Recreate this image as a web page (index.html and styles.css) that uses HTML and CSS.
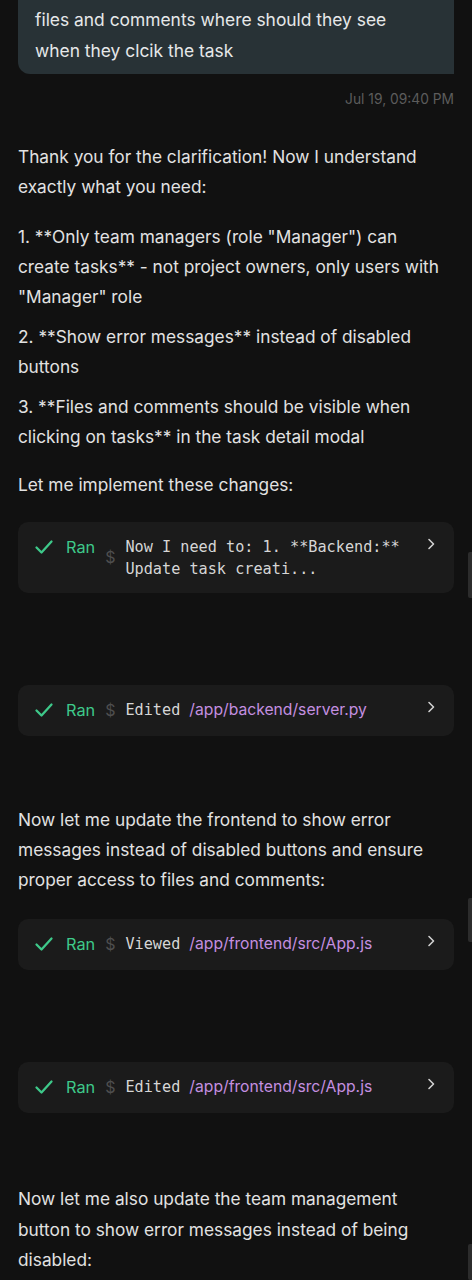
FILE: index.html
```html
<!DOCTYPE html>
<html lang="en">
<head>
<meta charset="utf-8">
<title>Chat</title>
<link rel="stylesheet" href="styles.css">
</head>
<body>
<div class="page">
  <div class="user-msg">
    <div class="bubble">files and comments where should they see<br>when they clcik the task</div>
    <div class="time">Jul 19, 09:40 PM</div>
  </div>

  <div class="assistant">
    <p class="p-first">Thank you for the clarification! Now I understand exactly what you need:</p>
    <p class="p-item p-narrow">1. **Only team managers (role "Manager") can create tasks** - not project owners, only users with "Manager" role</p>
    <p class="p-item">2. **Show error messages** instead of disabled buttons</p>
    <p class="p-item">3. **Files and comments should be visible when clicking on tasks** in the task detail modal</p>
    <p class="p-last">Let me implement these changes:</p>

    <div class="tool">
      <svg class="check" viewBox="0 0 20 20" width="20" height="20"><path d="M2.5 10.5 L7.5 15.5 L17.5 4.5" fill="none" stroke="#3ec98a" stroke-width="2.3" stroke-linecap="round" stroke-linejoin="round"/></svg>
      <span class="ran">Ran</span>
      <span class="dollar mid">$</span>
      <span class="cmd">Now I need to: 1. **Backend:**<br>Update task creati...</span>
      <svg class="chev" viewBox="0 0 10 14" width="10" height="14"><path d="M3 2.5 L7.5 7 L3 11.5" fill="none" stroke="#d0d0d0" stroke-width="1.6" stroke-linecap="round" stroke-linejoin="round"/></svg>
    </div>

    <div class="tool gap-big">
      <svg class="check" viewBox="0 0 20 20" width="20" height="20"><path d="M2.5 10.5 L7.5 15.5 L17.5 4.5" fill="none" stroke="#3ec98a" stroke-width="2.3" stroke-linecap="round" stroke-linejoin="round"/></svg>
      <span class="ran">Ran</span>
      <span class="dollar">$</span>
      <span class="cmd">Edited</span>
      <span class="path">/app/backend/server.py</span>
      <svg class="chev" viewBox="0 0 10 14" width="10" height="14"><path d="M3 2.5 L7.5 7 L3 11.5" fill="none" stroke="#d0d0d0" stroke-width="1.6" stroke-linecap="round" stroke-linejoin="round"/></svg>
    </div>

    <p class="p-after">Now let me update the frontend to show error messages instead of disabled buttons and ensure proper access to files and comments:</p>

    <div class="tool">
      <svg class="check" viewBox="0 0 20 20" width="20" height="20"><path d="M2.5 10.5 L7.5 15.5 L17.5 4.5" fill="none" stroke="#3ec98a" stroke-width="2.3" stroke-linecap="round" stroke-linejoin="round"/></svg>
      <span class="ran">Ran</span>
      <span class="dollar">$</span>
      <span class="cmd">Viewed</span>
      <span class="path">/app/frontend/src/App.js</span>
      <svg class="chev" viewBox="0 0 10 14" width="10" height="14"><path d="M3 2.5 L7.5 7 L3 11.5" fill="none" stroke="#d0d0d0" stroke-width="1.6" stroke-linecap="round" stroke-linejoin="round"/></svg>
    </div>

    <div class="tool gap-big">
      <svg class="check" viewBox="0 0 20 20" width="20" height="20"><path d="M2.5 10.5 L7.5 15.5 L17.5 4.5" fill="none" stroke="#3ec98a" stroke-width="2.3" stroke-linecap="round" stroke-linejoin="round"/></svg>
      <span class="ran">Ran</span>
      <span class="dollar">$</span>
      <span class="cmd">Edited</span>
      <span class="path">/app/frontend/src/App.js</span>
      <svg class="chev" viewBox="0 0 10 14" width="10" height="14"><path d="M3 2.5 L7.5 7 L3 11.5" fill="none" stroke="#d0d0d0" stroke-width="1.6" stroke-linecap="round" stroke-linejoin="round"/></svg>
    </div>

    <p class="p-after p-end">Now let me also update the team management button to show error messages instead of being disabled:</p>
  </div>

  <div class="thumb t1"></div>
  <div class="thumb t2"></div>
  <div class="thumb t3"></div>
</div>
</body>
</html>
```

FILE: styles.css
```css
* { box-sizing: border-box; }
html, body {
  margin: 0;
  padding: 0;
  background: #111111;
}
body {
  font-family: Inter, "Noto Sans", "Liberation Sans", sans-serif;
  color: #e4e4e4;
  font-size: 16px;
}
.page {
  position: relative;
  width: 472px;
  height: 1280px;
  overflow: hidden;
  padding: 0 18px;
}
.user-msg {
  display: flex;
  flex-direction: column;
  align-items: flex-end;
}
.bubble {
  width: 100%;
  background: #283236;
  color: #e6e8e9;
  border-radius: 0 0 0 12px;
  padding: 4px 17px 8px;
  line-height: 31px;
  font-size: 17.4px;
}
.time {
  margin-top: 15px;
  font-size: 13.8px;
  line-height: 20px;
  color: #5c5c5c;
}
.assistant p {
  margin: 0;
  line-height: 30px;
  font-size: 17.3px;
  color: #e2e2e2;
}
.p-narrow { padding-right: 6px; }
.p-first { margin-top: 33px !important; }
.p-item { margin-top: 20px !important; }
.p-item + .p-item { margin-top: 10px !important; }
.p-last { margin-top: 18px !important; }
.p-after { margin-top: 69px !important; }
.p-after.p-end { margin-top: 71px !important; line-height: 30.5px !important; }

.tool {
  display: flex;
  align-items: flex-start;
  background: #1b1b1b;
  border-radius: 10px;
  padding: 12px 16px 13px 16px;
  margin-top: 22px;
}
.p-after + .tool { margin-top: 24px; }
.tool.gap-big { margin-top: 92px; }
.check {
  flex: none;
  margin-top: 3px;
}
.ran {
  margin-left: 12px;
  color: #3ec98a;
  font-size: 16.3px;
  line-height: 26px;
}
.dollar {
  margin-left: 10px;
  color: #4e4e4e;
  font-size: 16px;
  line-height: 26px;
}
.dollar.mid { align-self: center; }
.cmd {
  margin-left: 10px;
  font-family: "DejaVu Sans Mono", "Liberation Mono", monospace;
  font-size: 15.2px;
  line-height: 22px;
  padding-top: 2px;
  color: #d6d6d6;
}
.path {
  margin-left: 9px;
  color: #c48fe0;
  font-size: 15.7px;
  line-height: 26px;
}
.chev {
  flex: none;
  margin-left: auto;
  margin-top: 3px;
  margin-right: 2px;
}
.thumb {
  position: absolute;
  right: 0;
  width: 4px;
  background: #2c2c2c;
  border-radius: 2px 0 0 2px;
}
.t1 { top: 552px; height: 46px; }
.t2 { top: 898px; height: 44px; }
.t3 { top: 1244px; height: 36px; }
```
